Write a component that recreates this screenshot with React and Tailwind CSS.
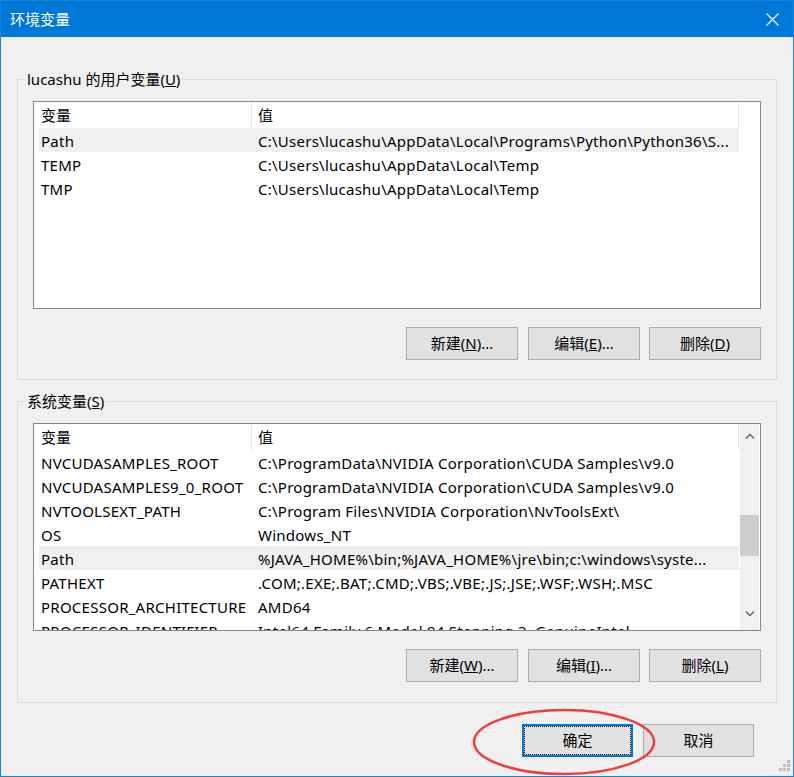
import React from "react";

const FONT = { fontFamily: "'Noto Sans', 'Noto Sans CJK SC', sans-serif" };

const userVars = [
  ["Path", "C:\\Users\\lucashu\\AppData\\Local\\Programs\\Python\\Python36\\S...", true],
  ["TEMP", "C:\\Users\\lucashu\\AppData\\Local\\Temp"],
  ["TMP", "C:\\Users\\lucashu\\AppData\\Local\\Temp"],
];

const sysVars = [
  ["NVCUDASAMPLES_ROOT", "C:\\ProgramData\\NVIDIA Corporation\\CUDA Samples\\v9.0"],
  ["NVCUDASAMPLES9_0_ROOT", "C:\\ProgramData\\NVIDIA Corporation\\CUDA Samples\\v9.0"],
  ["NVTOOLSEXT_PATH", "C:\\Program Files\\NVIDIA Corporation\\NvToolsExt\\"],
  ["OS", "Windows_NT"],
  ["Path", "%JAVA_HOME%\\bin;%JAVA_HOME%\\jre\\bin;c:\\windows\\syste...", true],
  ["PATHEXT", ".COM;.EXE;.BAT;.CMD;.VBS;.VBE;.JS;.JSE;.WSF;.WSH;.MSC"],
  ["PROCESSOR_ARCHITECTURE", "AMD64"],
  ["PROCESSOR_IDENTIFIER", "Intel64 Family 6 Model 94 Stepping 3, GenuineIntel"],
];

function WinButton({ children, className = "" }) {
  return (
    <button
      type="button"
      className={`flex h-[33px] items-center justify-center border border-[#adadad] bg-[#e1e1e1] text-[15px] text-black ${className}`}
    >
      {children}
    </button>
  );
}

function VarList({ rows, scroll }) {
  return (
    <div className="relative flex h-[208px] overflow-hidden border border-[#828790] bg-white">
      <div className="flex flex-1 flex-col overflow-hidden pl-[5px]">
        {/* header */}
        <div className="flex h-[26px] w-[700px] shrink-0 text-[15px] leading-[20px]">
          <div className="flex w-[213px] items-center border-r border-[#e5e5e5] pl-[2px]">变量</div>
          <div className="flex flex-1 items-center border-r border-[#e5e5e5] pl-[6px]">值</div>
        </div>
        {rows.map(([name, value, hl]) => (
          <div
            key={name}
            className={`flex h-[24px] w-[700px] shrink-0 items-center whitespace-nowrap text-[15px] leading-[20px] tracking-[0.25px] ${
              hl ? "bg-[#f0f0f0]" : ""
            }`}
          >
            <div className="w-[213px] pl-[2px] pt-[1px]">{name}</div>
            <div className="flex-1 pl-[6px] pt-[1px]">{value}</div>
          </div>
        ))}
      </div>
      {scroll && (
        <div className="mr-[1px] flex w-[19px] shrink-0 flex-col bg-[#f0f0f0]">
          <div className="flex h-[24px] items-center justify-center">
            <svg width="10" height="6" viewBox="0 0 10 6">
              <path d="M1 5.5 L5 1.5 L9 5.5" fill="none" stroke="#606060" strokeWidth="1.3" />
            </svg>
          </div>
          <div className="mt-[67px] h-[41px] bg-[#cdcdcd]" />
          <div className="mt-auto mb-[4px] flex h-[24px] items-center justify-center">
            <svg width="10" height="6" viewBox="0 0 10 6">
              <path d="M1 0.5 L5 4.5 L9 0.5" fill="none" stroke="#606060" strokeWidth="1.3" />
            </svg>
          </div>
        </div>
      )}
    </div>
  );
}

function GroupBox({ label, rows, scroll, buttons, heightClass, bottomPad }) {
  return (
    <div className={`relative flex flex-col border border-[#dcdcdc] px-[15px] pt-[21px] ${heightClass} ${bottomPad}`}>
      <span className="absolute -top-[11px] left-[7px] bg-[#f0f0f0] px-[2px] text-[15px] leading-[20px] text-black">
        {label}
      </span>
      <VarList rows={rows} scroll={scroll} />
      <div className="mt-[18px] flex justify-end gap-[9px]">
        {buttons.map((b, i) => (
          <WinButton key={i} className={`w-[112px] ${i === 0 ? "mr-[1px]" : ""}`}>
            {b}
          </WinButton>
        ))}
      </div>
    </div>
  );
}

export default function App() {
  return (
    <div
      className="relative flex h-[777px] w-[794px] flex-col overflow-hidden border border-[#1883d7] bg-[#f0f0f0] text-black"
      style={FONT}
    >
      {/* title bar */}
      <div className="flex h-[36px] shrink-0 items-center justify-between bg-[#0078d7] pl-[9px] pr-[14px] text-[15px] text-white">
        <span className="pt-[1px]">环境变量</span>
        <svg width="13" height="13" viewBox="0 0 13 13">
          <path d="M0.5 0.5 L12.5 12.5 M12.5 0.5 L0.5 12.5" stroke="#fff" strokeWidth="1.1" />
        </svg>
      </div>

      <div className="flex flex-1 flex-col px-[16px] pt-[42px]">
        <GroupBox
          label={<>lucashu 的用户变量(<u>U</u>)</>}
          rows={userVars}
          heightClass="h-[301px]"
          bottomPad="pb-[19px]"
          buttons={[
            <>新建(<u>N</u>)...</>,
            <>编辑(<u>E</u>)...</>,
            <>删除(<u>D</u>)</>,
          ]}
        />
        <div className="mt-[21px]">
          <GroupBox
            label={<>系统变量(<u>S</u>)</>}
            rows={sysVars}
            scroll
            heightClass="h-[302px]"
            bottomPad="pb-[20px]"
            buttons={[
              <>新建(<u>W</u>)...</>,
              <>编辑(<u>I</u>)...</>,
              <>删除(<u>L</u>)</>,
            ]}
          />
        </div>

        <div className="mt-[21px] flex justify-end gap-[10px] pr-[23px]">
          <button
            type="button"
            className="flex h-[33px] w-[111px] border-2 border-[#0078d7] bg-[#e1e1e1] p-0 text-[15px]"
          >
            <span className="m-0 flex h-full w-full items-center justify-center border border-dotted border-black">
              确定
            </span>
          </button>
          <WinButton className="w-[111px]">取消</WinButton>
        </div>
      </div>

      {/* red annotation ellipse */}
      <svg className="pointer-events-none absolute left-[466px] top-[703px]" width="196" height="76" viewBox="0 0 196 76">
        <ellipse cx="97" cy="38" rx="90" ry="32" fill="none" stroke="#ef3e3e" strokeWidth="2.5" />
      </svg>

      {/* resize grip */}
      <svg className="absolute right-[2px] bottom-[2px]" width="14" height="14" viewBox="0 0 14 14">
        <rect x="10" y="0" width="3" height="3" fill="#bdbdbd" />
        <rect x="6" y="4" width="3" height="3" fill="#bdbdbd" />
        <rect x="10" y="4" width="3" height="3" fill="#bdbdbd" />
        <rect x="2" y="8" width="3" height="3" fill="#bdbdbd" />
        <rect x="6" y="8" width="3" height="3" fill="#bdbdbd" />
        <rect x="10" y="8" width="3" height="3" fill="#bdbdbd" />
      </svg>
    </div>
  );
}
